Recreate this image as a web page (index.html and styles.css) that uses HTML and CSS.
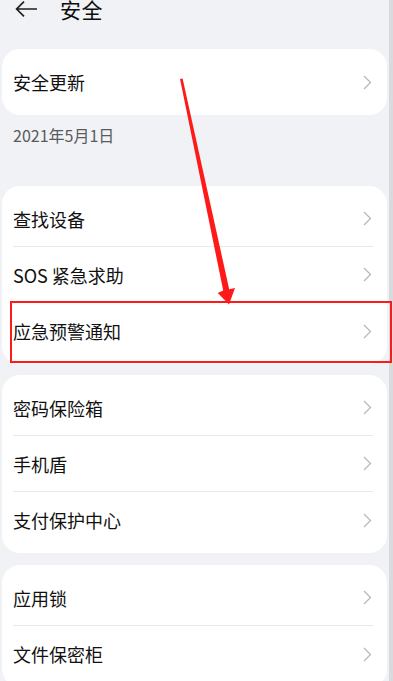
FILE: index.html
```html
<!DOCTYPE html>
<html lang="zh-CN">
<head>
<meta charset="utf-8">
<title>安全</title>
<link rel="stylesheet" href="styles.css">
</head>
<body>
<div class="screen">
  <div class="content">
    <header class="header">
      <svg class="back" width="22" height="16" viewBox="0 0 22 16"><path d="M22 8H1.6M9 0.6L1.6 8L9 15.4" fill="none" stroke="#1f1f1f" stroke-width="1.7"/></svg>
      <span class="title">安全</span>
    </header>

    <section class="card card-first">
      <div class="row"><span class="label">安全更新</span><svg class="chev" width="9" height="15" viewBox="0 0 9 15"><path d="M1 1L7.5 7.5L1 14" fill="none" stroke="#b9b9b9" stroke-width="1.3"/></svg></div>
    </section>
    <div class="date">2021年5月1日</div>

    <section class="card card-second">
      <div class="row"><span class="label">查找设备</span><svg class="chev" width="9" height="15" viewBox="0 0 9 15"><path d="M1 1L7.5 7.5L1 14" fill="none" stroke="#b9b9b9" stroke-width="1.3"/></svg></div>
      <div class="row"><span class="label">SOS 紧急求助</span><svg class="chev" width="9" height="15" viewBox="0 0 9 15"><path d="M1 1L7.5 7.5L1 14" fill="none" stroke="#b9b9b9" stroke-width="1.3"/></svg></div>
      <div class="row"><span class="label">应急预警通知</span><svg class="chev" width="9" height="15" viewBox="0 0 9 15"><path d="M1 1L7.5 7.5L1 14" fill="none" stroke="#b9b9b9" stroke-width="1.3"/></svg></div>
    </section>

    <section class="card card-third">
      <div class="row"><span class="label">密码保险箱</span><svg class="chev" width="9" height="15" viewBox="0 0 9 15"><path d="M1 1L7.5 7.5L1 14" fill="none" stroke="#b9b9b9" stroke-width="1.3"/></svg></div>
      <div class="row"><span class="label">手机盾</span><svg class="chev" width="9" height="15" viewBox="0 0 9 15"><path d="M1 1L7.5 7.5L1 14" fill="none" stroke="#b9b9b9" stroke-width="1.3"/></svg></div>
      <div class="row"><span class="label">支付保护中心</span><svg class="chev" width="9" height="15" viewBox="0 0 9 15"><path d="M1 1L7.5 7.5L1 14" fill="none" stroke="#b9b9b9" stroke-width="1.3"/></svg></div>
    </section>

    <section class="card card-fourth">
      <div class="row"><span class="label">应用锁</span><svg class="chev" width="9" height="15" viewBox="0 0 9 15"><path d="M1 1L7.5 7.5L1 14" fill="none" stroke="#b9b9b9" stroke-width="1.3"/></svg></div>
      <div class="row"><span class="label">文件保密柜</span><svg class="chev" width="9" height="15" viewBox="0 0 9 15"><path d="M1 1L7.5 7.5L1 14" fill="none" stroke="#b9b9b9" stroke-width="1.3"/></svg></div>
    </section>
  </div>
  <div class="edge"></div>

  <svg class="annotation" width="393" height="681" viewBox="0 0 393 681">
    <polygon points="180,79 182.6,78.6 229.2,289.2 235,288 229,304.5 217.8,293 223.2,290.6" fill="#ff1a1a"/>
    <rect x="11" y="302" width="380" height="60" fill="none" stroke="#ff1a1a" stroke-width="2"/>
  </svg>
</div>
</body>
</html>
```

FILE: styles.css
```css
html, body {
  margin: 0;
  padding: 0;
}

body {
  background: #f1f2f5;
  font-family: "Noto Sans CJK SC", "Noto Sans", sans-serif;
  color: #111;
  overflow: hidden;
}

.screen {
  position: relative;
  width: 393px;
  height: 681px;
  display: flex;
  overflow: hidden;
}

.content {
  flex: 1;
  display: flex;
  flex-direction: column;
}

.edge {
  width: 4px;
  background: #d9dadd;
}

.header {
  display: flex;
  align-items: center;
  height: 20px;
  margin-top: -1px;
  padding-left: 15px;
  gap: 23px;
}

.back {
  flex: none;
}

.title {
  font-size: 21px;
  line-height: 20px;
  color: #0d0d0d;
  letter-spacing: 0.5px;
}

.card {
  background: #ffffff;
  border-radius: 18px;
  margin: 0 2px;
  padding: 5px 0;
}

.card-first {
  margin-top: 30px;
}

.card-second {
  margin-top: 41px;
}

.card-third {
  margin-top: 11px;
}

.card-fourth {
  margin-top: 12px;
}

.row {
  height: 56px;
  margin: 0 14px 0 11px;
  display: flex;
  align-items: center;
  justify-content: space-between;
  border-bottom: 1px solid #e9e9eb;
  box-sizing: border-box;
}

.row:last-child {
  border-bottom: none;
}

.label {
  font-size: 18px;
  line-height: 24px;
  color: #111;
}

.chev {
  flex: none;
  margin-right: 1px;
}

.date {
  margin-top: 10px;
  padding-left: 13px;
  font-size: 16px;
  line-height: 20px;
  color: #5a5a5e;
}

.annotation {
  position: absolute;
  left: 0;
  top: 0;
  pointer-events: none;
}
```
